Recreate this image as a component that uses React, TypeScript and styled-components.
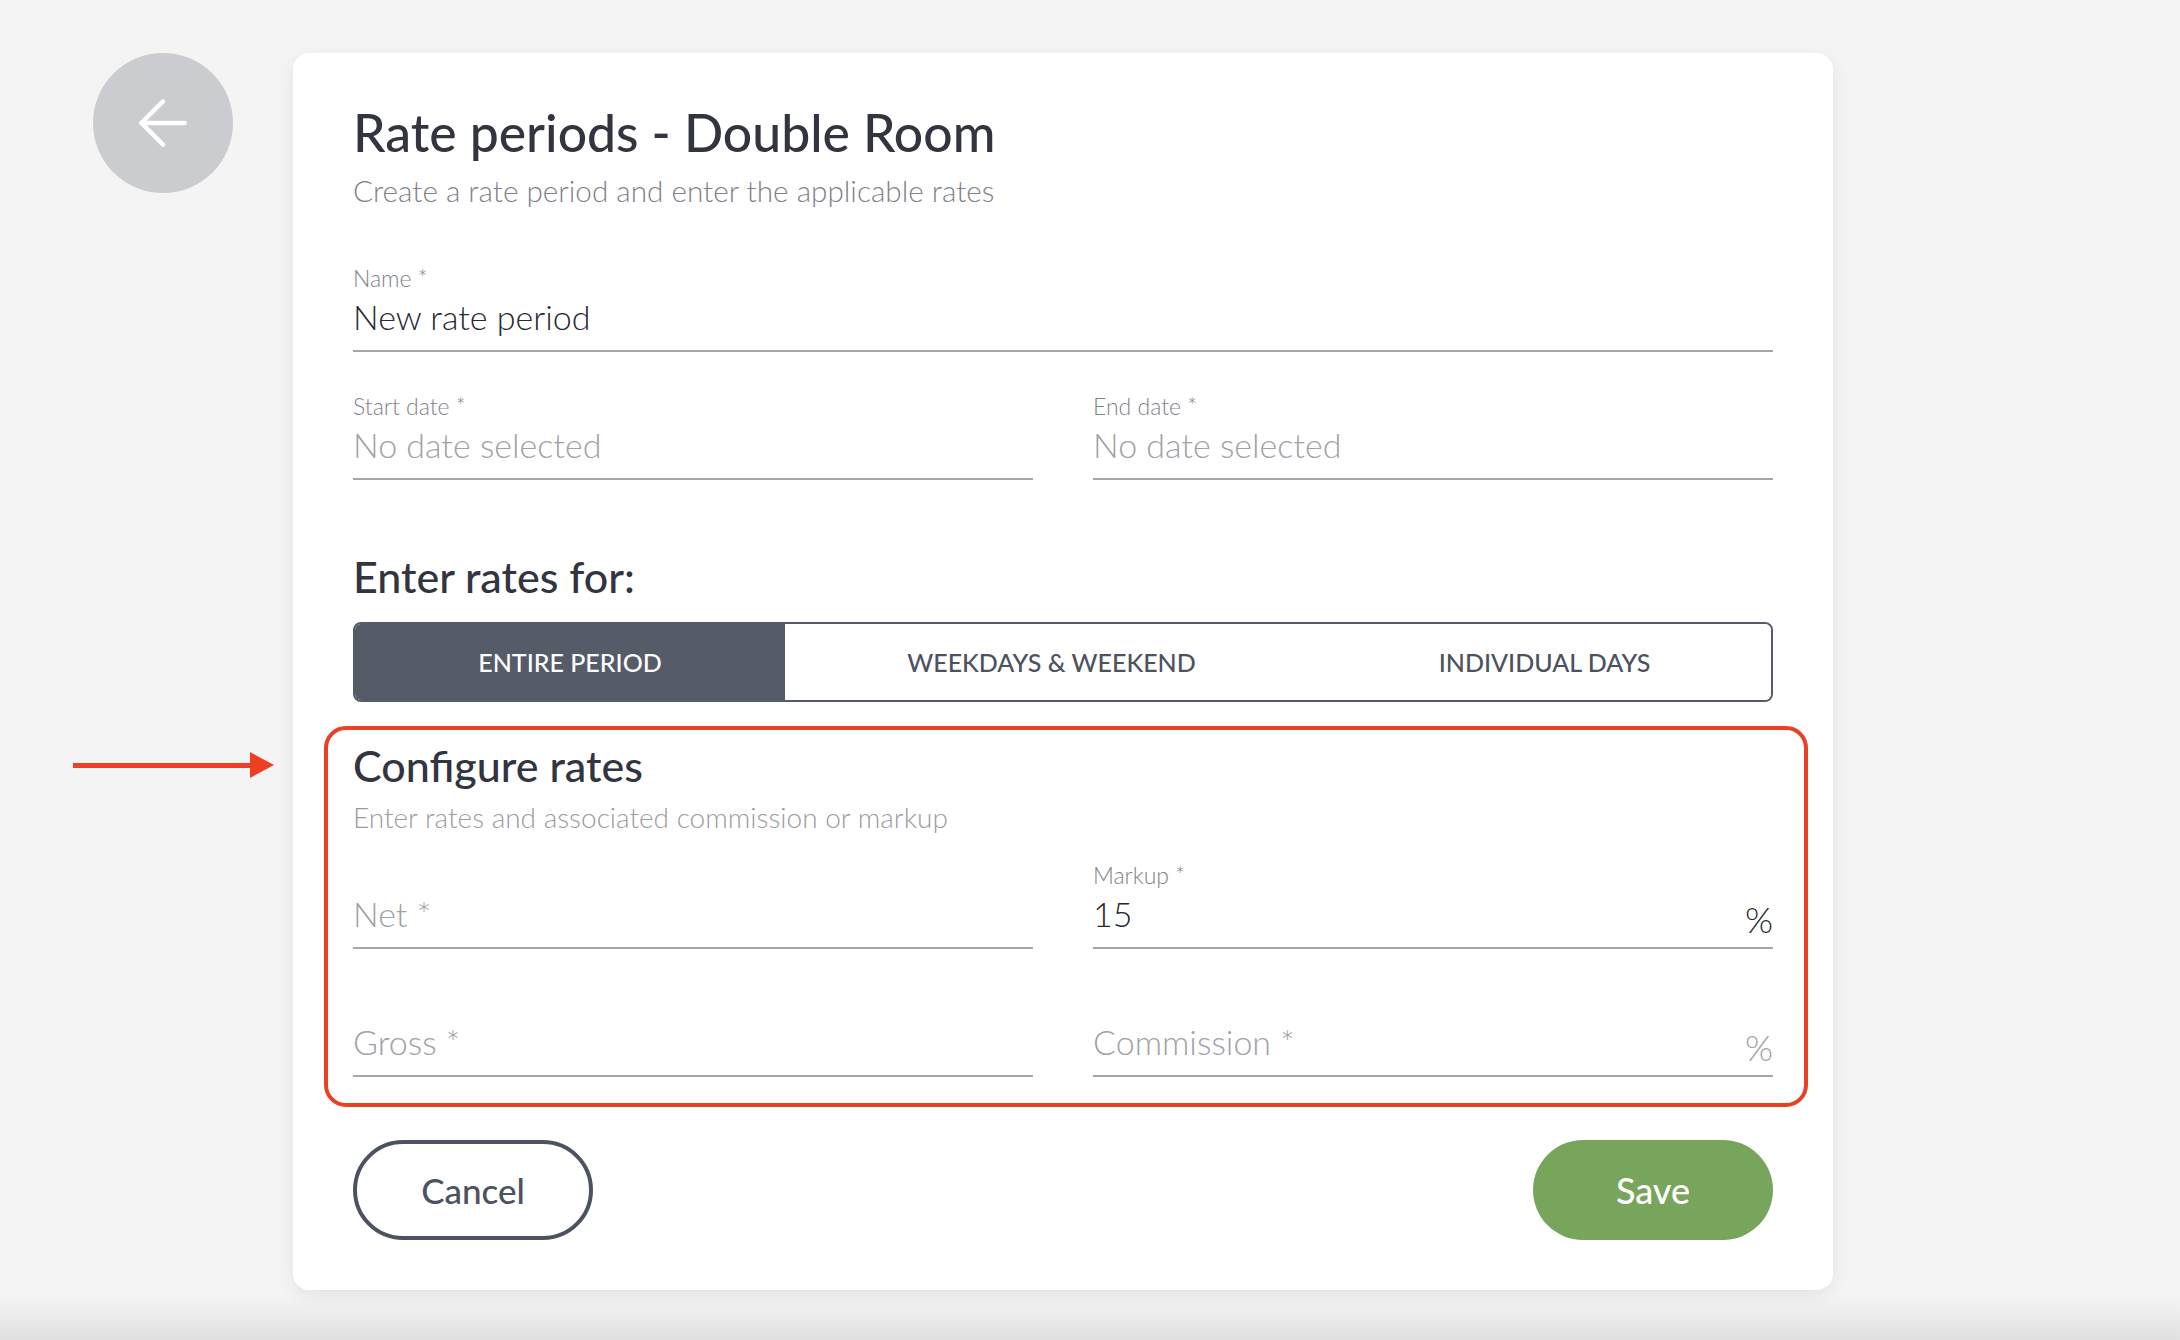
import React from 'react';
import styled, { createGlobalStyle } from 'styled-components';
import { ArrowLeft } from 'lucide-react';

const GlobalStyle = createGlobalStyle`
  html, body {
    margin: 0;
    padding: 0;
    height: 100%;
    font-family: Lato, "Liberation Sans", sans-serif;
    background: #f4f4f4;
  }
  * {
    box-sizing: border-box;
  }
`;

const Page = styled.div`
  position: relative;
  width: 2180px;
  height: 1340px;
  overflow: hidden;
  display: flex;
  align-items: flex-start;
  gap: 60px;
  padding: 53px 0 0 93px;
  background: linear-gradient(to bottom, #f4f4f4 0, #f4f4f4 1296px, #e0e0e1 1340px);
`;

const BackButton = styled.button`
  width: 140px;
  height: 140px;
  flex: none;
  border: none;
  border-radius: 50%;
  background: #cbccd0;
  color: #fff;
  display: flex;
  align-items: center;
  justify-content: center;
  padding: 0;
`;

const Card = styled.main`
  width: 1540px;
  height: 1237px;
  flex: none;
  background: #fff;
  border-radius: 16px;
  padding: 50px 60px 0;
  box-shadow: 0 6px 18px rgba(0, 0, 0, 0.07);
`;

const Title = styled.h1`
  margin: 0;
  height: 58px;
  font-family: Lato, sans-serif;
  font-size: 51.7px;
  line-height: 58px;
  font-weight: 500;
  color: #32343f;
`;

const Subtitle = styled.p<{ $light?: boolean }>`
  margin: 0;
  font-size: ${props => (props.$light ? '28px' : '29.7px')};
  line-height: 36px;
  font-weight: 300;
  color: ${props => (props.$light ? '#9a9ca2' : '#7f828b')};
`;

const Intro = styled.header`
  display: flex;
  flex-direction: column;
  gap: 12px;
  margin-bottom: 15px;
`;

const Fields = styled.div<{ $pulled?: boolean }>`
  display: grid;
  grid-template-columns: 1fr 1fr;
  column-gap: 60px;
  row-gap: 0;
  margin-top: ${props => (props.$pulled ? '-14px' : '0')};
`;

const Field = styled.div<{ $wide?: boolean }>`
  grid-column: ${props => (props.$wide ? '1 / -1' : 'auto')};
  height: 128px;
  display: flex;
  flex-direction: column;
  justify-content: flex-end;
`;

const FieldLabel = styled.label`
  font-size: 23px;
  line-height: 26px;
  font-weight: 300;
  color: #7f828b;
  margin-bottom: 5px;
`;

const FieldLine = styled.div`
  height: 56px;
  display: flex;
  align-items: flex-start;
  justify-content: space-between;
  border-bottom: 2px solid #a5a7ab;
`;

const FieldValue = styled.span<{ $tone?: 'value' | 'muted' }>`
  font-size: 34px;
  line-height: 42px;
  font-weight: 300;
  color: ${props => (props.$tone === 'muted' ? '#a0a1a6' : '#262833')};
`;

const Suffix = styled.span<{ $muted?: boolean }>`
  font-size: 36px;
  line-height: 42px;
  font-weight: 300;
  margin-top: 5px;
  color: ${props => (props.$muted ? '#a0a1a6' : '#262833')};
`;

const SectionTitle = styled.h2`
  margin: 0;
  font-size: 43px;
  line-height: 48px;
  font-weight: 500;
  color: #32343f;
`;

const RatesFor = styled.section`
  margin-top: 73px;
`;

const Tabs = styled.div`
  display: grid;
  grid-template-columns: 430px 1fr 1fr;
  height: 80px;
  margin-top: 21px;
  border: 2px solid #555b69;
  border-radius: 8px;
  overflow: hidden;
`;

const Tab = styled.div<{ $active?: boolean }>`
  display: flex;
  align-items: center;
  justify-content: center;
  padding-left: ${props => (props.$active ? '0' : '40px')};
  font-size: 25px;
  font-weight: 500;
  background: ${props => (props.$active ? '#555b69' : '#fff')};
  color: ${props => (props.$active ? '#fff' : '#4c5260')};
`;

const Highlight = styled.section`
  height: 381px;
  margin: 24px -35px 0 -29px;
  padding: 12px 31px 0 25px;
  border: 4px solid #eb4024;
  border-radius: 22px;
`;

const HighlightIntro = styled.header`
  display: flex;
  flex-direction: column;
  gap: 9px;
`;

const Placeholder = styled.span`
  font-size: 34px;
  line-height: 42px;
  font-weight: 300;
  color: #a0a1a6;
`;

const Actions = styled.footer`
  display: flex;
  justify-content: space-between;
  margin-top: 33px;
`;

const Button = styled.button<{ $primary?: boolean }>`
  width: 240px;
  height: 100px;
  border-radius: 50px;
  font-family: Lato, sans-serif;
  font-size: ${props => (props.$primary ? '36px' : '35px')};
  font-weight: 500;
  border: ${props => (props.$primary ? 'none' : '4px solid #4c5260')};
  background: ${props => (props.$primary ? '#78a55c' : '#fff')};
  color: ${props => (props.$primary ? '#fff' : '#4c5260')};
`;

const Pointer = styled.svg`
  position: absolute;
  left: 73px;
  top: 752px;
`;

export default function App() {
  return (
    <>
      <GlobalStyle />
      <Page>
        <BackButton aria-label="Back">
          <ArrowLeft size={74} strokeWidth={1.45} />
        </BackButton>

        <Card>
          <Intro>
            <Title>Rate periods - Double Room</Title>
            <Subtitle>Create a rate period and enter the applicable rates</Subtitle>
          </Intro>

          <Fields>
            <Field $wide>
              <FieldLabel>Name *</FieldLabel>
              <FieldLine>
                <FieldValue>New rate period</FieldValue>
              </FieldLine>
            </Field>
            <Field>
              <FieldLabel>Start date *</FieldLabel>
              <FieldLine>
                <FieldValue $tone="muted">No date selected</FieldValue>
              </FieldLine>
            </Field>
            <Field>
              <FieldLabel>End date *</FieldLabel>
              <FieldLine>
                <FieldValue $tone="muted">No date selected</FieldValue>
              </FieldLine>
            </Field>
          </Fields>

          <RatesFor>
            <SectionTitle>Enter rates for:</SectionTitle>
            <Tabs>
              <Tab $active>ENTIRE PERIOD</Tab>
              <Tab>WEEKDAYS &amp; WEEKEND</Tab>
              <Tab>INDIVIDUAL DAYS</Tab>
            </Tabs>
          </RatesFor>

          <Highlight>
            <HighlightIntro>
              <SectionTitle>Configure rates</SectionTitle>
              <Subtitle $light>Enter rates and associated commission or markup</Subtitle>
            </HighlightIntro>
            <Fields $pulled>
              <Field>
                <FieldLine>
                  <Placeholder>Net *</Placeholder>
                </FieldLine>
              </Field>
              <Field>
                <FieldLabel>Markup *</FieldLabel>
                <FieldLine>
                  <FieldValue>15</FieldValue>
                  <Suffix>%</Suffix>
                </FieldLine>
              </Field>
              <Field>
                <FieldLine>
                  <Placeholder>Gross *</Placeholder>
                </FieldLine>
              </Field>
              <Field>
                <FieldLine>
                  <Placeholder>Commission *</Placeholder>
                  <Suffix $muted>%</Suffix>
                </FieldLine>
              </Field>
            </Fields>
          </Highlight>

          <Actions>
            <Button>Cancel</Button>
            <Button $primary>Save</Button>
          </Actions>
        </Card>

        <Pointer width="201" height="26" viewBox="0 0 201 26" aria-hidden="true">
          <rect x="0" y="11" width="179" height="5" fill="#eb4024" />
          <polygon points="177,0 201,13 177,26" fill="#eb4024" />
        </Pointer>
      </Page>
    </>
  );
}
